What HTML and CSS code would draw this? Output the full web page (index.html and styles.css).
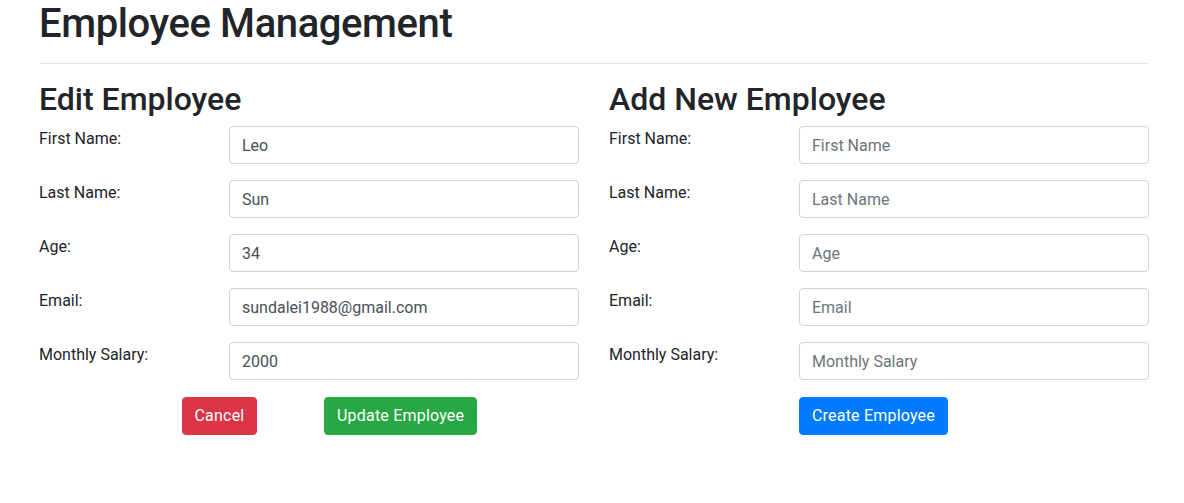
FILE: index.html
```html
<!DOCTYPE html>
<html lang="en">
<head>
<meta charset="utf-8">
<title>Employee Management</title>
<link rel="stylesheet" href="styles.css">
</head>
<body>
<div class="container">
  <h1 class="title">Employee Management</h1>
  <hr class="divider">
  <div class="columns">
    <section class="panel">
      <h2 class="panel-title">Edit Employee</h2>
      <div class="field">
        <label class="field-label">First Name:</label>
        <div class="field-control"><input class="input" type="text" value="Leo"></div>
      </div>
      <div class="field">
        <label class="field-label">Last Name:</label>
        <div class="field-control"><input class="input" type="text" value="Sun"></div>
      </div>
      <div class="field">
        <label class="field-label">Age:</label>
        <div class="field-control"><input class="input" type="text" value="34"></div>
      </div>
      <div class="field">
        <label class="field-label">Email:</label>
        <div class="field-control"><input class="input" type="text" value="sundalei1988@gmail.com"></div>
      </div>
      <div class="field">
        <label class="field-label">Monthly Salary:</label>
        <div class="field-control"><input class="input" type="text" value="2000"></div>
      </div>
      <div class="actions">
        <div class="action-cell offset-quarter"><button class="btn btn-danger">Cancel</button></div>
        <div class="action-cell"><button class="btn btn-success">Update Employee</button></div>
      </div>
    </section>
    <section class="panel">
      <h2 class="panel-title">Add New Employee</h2>
      <div class="field">
        <label class="field-label">First Name:</label>
        <div class="field-control"><input class="input" type="text" placeholder="First Name"></div>
      </div>
      <div class="field">
        <label class="field-label">Last Name:</label>
        <div class="field-control"><input class="input" type="text" placeholder="Last Name"></div>
      </div>
      <div class="field">
        <label class="field-label">Age:</label>
        <div class="field-control"><input class="input" type="text" placeholder="Age"></div>
      </div>
      <div class="field">
        <label class="field-label">Email:</label>
        <div class="field-control"><input class="input" type="text" placeholder="Email"></div>
      </div>
      <div class="field">
        <label class="field-label">Monthly Salary:</label>
        <div class="field-control"><input class="input" type="text" placeholder="Monthly Salary"></div>
      </div>
      <div class="actions">
        <div class="action-cell offset-third"><button class="btn btn-primary">Create Employee</button></div>
      </div>
    </section>
  </div>
</div>
</body>
</html>
```
FILE: styles.css
```css
* { box-sizing: border-box; }
body {
  margin: 0;
  font-family: Roboto, "Noto Sans", "Liberation Sans", sans-serif;
  font-size: 16px;
  line-height: 1.5;
  color: #212529;
  background: #fff;
}
.container {
  width: 1140px;
  margin-left: 24px;
  padding: 0 15px;
}
.title {
  margin: 0 0 8px;
  font-size: 40px;
  font-weight: 500;
  line-height: 1.2;
  letter-spacing: -0.4px;
}
.divider {
  margin: 15px 0 16px;
  border: 0;
  border-top: 1px solid rgba(0,0,0,.1);
}
.columns {
  display: flex;
  margin: 0 -15px;
}
.panel {
  flex: 0 0 50%;
  padding: 0 15px;
}
.panel-title {
  margin: 0 0 8px;
  font-size: 32px;
  font-weight: 500;
  line-height: 1.2;
}
.field {
  display: flex;
  margin: 0 -15px 16px;
}
.field-label {
  flex: 0 0 33.3333%;
  padding: 1px 15px 0;
  font-size: 16px;
  line-height: 24px;
}
.field-control {
  flex: 0 0 66.6667%;
  padding: 0 15px;
}
.input {
  display: block;
  width: 100%;
  height: 38px;
  padding: 6px 12px;
  font-family: inherit;
  font-size: 16px;
  line-height: 1.5;
  color: #495057;
  background: #fff;
  border: 1px solid #ced4da;
  border-radius: 4px;
}
.input::placeholder { color: #6c757d; opacity: 1; }
.actions {
  display: flex;
  margin: 0 -15px;
  padding-top: 1px;
}
.action-cell { padding: 0 15px; }
.offset-quarter { margin-left: 25%; flex: 0 0 25%; }
.offset-third { margin-left: 33.3333%; }
.btn {
  display: inline-block;
  height: 38px;
  padding: 6px 12px;
  font-family: inherit;
  font-size: 16px;
  line-height: 1.5;
  letter-spacing: 0.2px;
  color: #fff;
  border: 1px solid transparent;
  border-radius: 4px;
}
.btn-danger { background: #dc3545; border-color: #dc3545; }
.btn-success { background: #28a745; border-color: #28a745; }
.btn-primary { background: #007bff; border-color: #007bff; }
```
